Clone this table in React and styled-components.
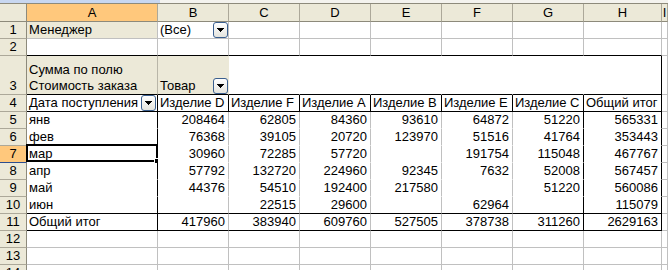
import React from "react";
import styled, { createGlobalStyle } from "styled-components";

const GRID = "#c0c0c0";
const INK = "#000000";
const FACE = "#ece9d8";
const PAPER = "#ffffff";
const HEAD_LINE = "#aca899";
const HEAD_EDGE = "#8d8a7b";
const PICK = "#ffc87c";
const PICK_EDGE = "#2c4d8f";

const Global = createGlobalStyle`
  html, body { margin: 0; padding: 0; background: #fff; overflow: hidden; }
  body {
    font-family: "Liberation Sans", Arial, sans-serif;
    font-size: 13px;
    color: #000;
  }
`;

const Window = styled.div`
  width: 668px;
  height: 270px;
  overflow: hidden;
  display: flex;
  flex-direction: column;
`;

const EditStrip = styled.div`
  flex: none;
  height: 3px;
  display: flex;
  background: #f4f3ee;
  border-bottom: 1px solid ${HEAD_EDGE};
`;

const NameBoxEdge = styled.div`
  width: 160px;
  background: #c8d7f0;
`;

const Sheet = styled.div`
  display: grid;
  grid-template-columns: 27px 131px repeat(6, 71px) 78px 1fr;
  grid-template-rows: 18px 17px 17px 39px repeat(11, 17px);
`;

const Corner = styled.div`
  box-sizing: border-box;
  background: ${FACE};
  border-right: 1px solid ${HEAD_EDGE};
  border-bottom: 1px solid ${HEAD_EDGE};
`;

const ColHead = styled.div`
  box-sizing: border-box;
  display: flex;
  align-items: flex-end;
  justify-content: center;
  line-height: 16px;
  background: ${(p) => (p.$active ? PICK : FACE)};
  border-right: 1px solid ${HEAD_LINE};
  border-bottom: 1px solid ${HEAD_EDGE};
`;

const RowHead = styled.div`
  box-sizing: border-box;
  display: flex;
  align-items: flex-end;
  justify-content: center;
  line-height: 16px;
  background: ${(p) => (p.$active ? PICK : FACE)};
  border-right: 1px solid ${HEAD_EDGE};
  border-bottom: 1px solid ${(p) => (p.$active ? PICK_EDGE : HEAD_LINE)};
`;

const Cell = styled.div`
  box-sizing: border-box;
  position: relative;
  display: flex;
  align-items: flex-end;
  justify-content: ${(p) => (p.$num ? "flex-end" : "flex-start")};
  padding: ${(p) => (p.$num ? "0 3px 0 0" : "0 0 0 2px")};
  background: ${(p) => p.$bg};
  border-right: 1px solid ${(p) => p.$r};
  border-bottom: 1px solid ${(p) => p.$b};
  line-height: 16px;
  white-space: nowrap;
`;

const Label = styled.span`
  flex: 1;
  min-width: 0;
  white-space: pre;
`;

const DropButton = styled.span`
  flex: none;
  box-sizing: border-box;
  width: 15px;
  height: 16px;
  margin-right: ${(p) => p.$gap || 0}px;
  border: 1px solid #3a5f8f;
  border-radius: 3px;
  background: linear-gradient(#ffffff, #e4e4de);
  display: flex;
  align-items: center;
  justify-content: center;
`;

const Cursor = styled.span`
  position: absolute;
  left: -1px;
  top: -2px;
  width: 132px;
  height: 18px;
  box-sizing: border-box;
  border: 2px solid #000;
  pointer-events: none;
`;

const FillHandle = styled.span`
  position: absolute;
  right: -4px;
  bottom: -4px;
  width: 4px;
  height: 4px;
  background: #000;
  border: 1px solid #fff;
`;

function Arrow() {
  return (
    <svg width="7" height="4" viewBox="0 0 7 4" shapeRendering="crispEdges">
      <rect x="0" y="0" width="7" height="1" fill="#000" />
      <rect x="1" y="1" width="5" height="1" fill="#000" />
      <rect x="2" y="2" width="3" height="1" fill="#000" />
      <rect x="3" y="3" width="1" height="1" fill="#000" />
    </svg>
  );
}

const LETTERS = ["A", "B", "C", "D", "E", "F", "G", "H", "I"];
const MONTHS = ["янв", "фев", "мар", "апр", "май", "июн"];
const PRODUCTS = [
  "Изделие D",
  "Изделие F",
  "Изделие A",
  "Изделие B",
  "Изделие E",
  "Изделие C",
  "Общий итог",
];
const VALUES = [
  [208464, 62805, 84360, 93610, 64872, 51220, 565331],
  [76368, 39105, 20720, 123970, 51516, 41764, 353443],
  [30960, 72285, 57720, "", 191754, 115048, 467767],
  [57792, 132720, 224960, 92345, 7632, 52008, 567457],
  [44376, 54510, 192400, 217580, "", 51220, 560086],
  ["", 22515, 29600, "", 62964, "", 115079],
];
const TOTALS = [417960, 383940, 609760, 527505, 378738, 311260, 2629163];

// Borders and fill of one sheet cell: the pivot table draws black frames,
// hides gridlines inside its data block and shades its field labels.
function frame(row, col) {
  const f = { $bg: PAPER, $r: GRID, $b: GRID };
  if (col > 7) return f;
  if (row === 1 && col === 0) f.$bg = FACE;
  if (row === 2) f.$b = INK;
  if (row === 3) {
    f.$b = INK;
    if (col === 0) {
      f.$bg = FACE;
      f.$r = "#b9b6a8";
    } else if (col === 1) {
      f.$bg = FACE;
      f.$r = FACE;
    } else {
      f.$r = col === 7 ? INK : PAPER;
    }
  }
  if (row === 4) {
    f.$r = INK;
    f.$b = INK;
  }
  if (row >= 5 && row <= 11) {
    f.$r = col === 0 || col >= 6 ? INK : GRID;
    f.$b = row >= 10 ? INK : PAPER;
  }
  return f;
}

function content(row, col) {
  if (row === 1 && col === 0) return { text: "Менеджер" };
  if (row === 1 && col === 1) return { text: "(Все)", drop: 0 };
  if (row === 3 && col === 0) return { text: "Сумма по полю\nСтоимость заказа" };
  if (row === 3 && col === 1) return { text: "Товар", drop: 0 };
  if (row === 4 && col === 0) return { text: "Дата поступления", drop: 1 };
  if (row === 4 && col >= 1 && col <= 7) return { text: PRODUCTS[col - 1] };
  if (row >= 5 && row <= 10) {
    if (col === 0) return { text: MONTHS[row - 5] };
    if (col <= 7) return { text: String(VALUES[row - 5][col - 1]), num: true };
  }
  if (row === 11) {
    if (col === 0) return { text: "Общий итог" };
    if (col <= 7) return { text: String(TOTALS[col - 1]), num: true };
  }
  return { text: "" };
}

const ACTIVE_ROW = 7;
const ACTIVE_COL = 0;

export default function App() {
  const rows = [];
  for (let r = 1; r <= 14; r++) {
    rows.push(
      <RowHead key={`h${r}`} $active={r === ACTIVE_ROW}>
        {r}
      </RowHead>
    );
    LETTERS.forEach((_, c) => {
      const c0 = content(r, c);
      const active = r === ACTIVE_ROW && c === ACTIVE_COL;
      rows.push(
        <Cell key={`${r}-${c}`} {...frame(r, c)} $num={c0.num}>
          {c0.num ? c0.text : <Label>{c0.text}</Label>}
          {c0.drop !== undefined && (
            <DropButton $gap={c0.drop}>
              <Arrow />
            </DropButton>
          )}
          {active && (
            <Cursor>
              <FillHandle />
            </Cursor>
          )}
        </Cell>
      );
    });
  }

  return (
    <Window>
      <Global />
      <EditStrip>
        <NameBoxEdge />
      </EditStrip>
      <Sheet>
        <Corner />
        {LETTERS.map((l, i) => (
          <ColHead key={l} $active={i === ACTIVE_COL}>
            {l}
          </ColHead>
        ))}
        {rows}
      </Sheet>
    </Window>
  );
}
